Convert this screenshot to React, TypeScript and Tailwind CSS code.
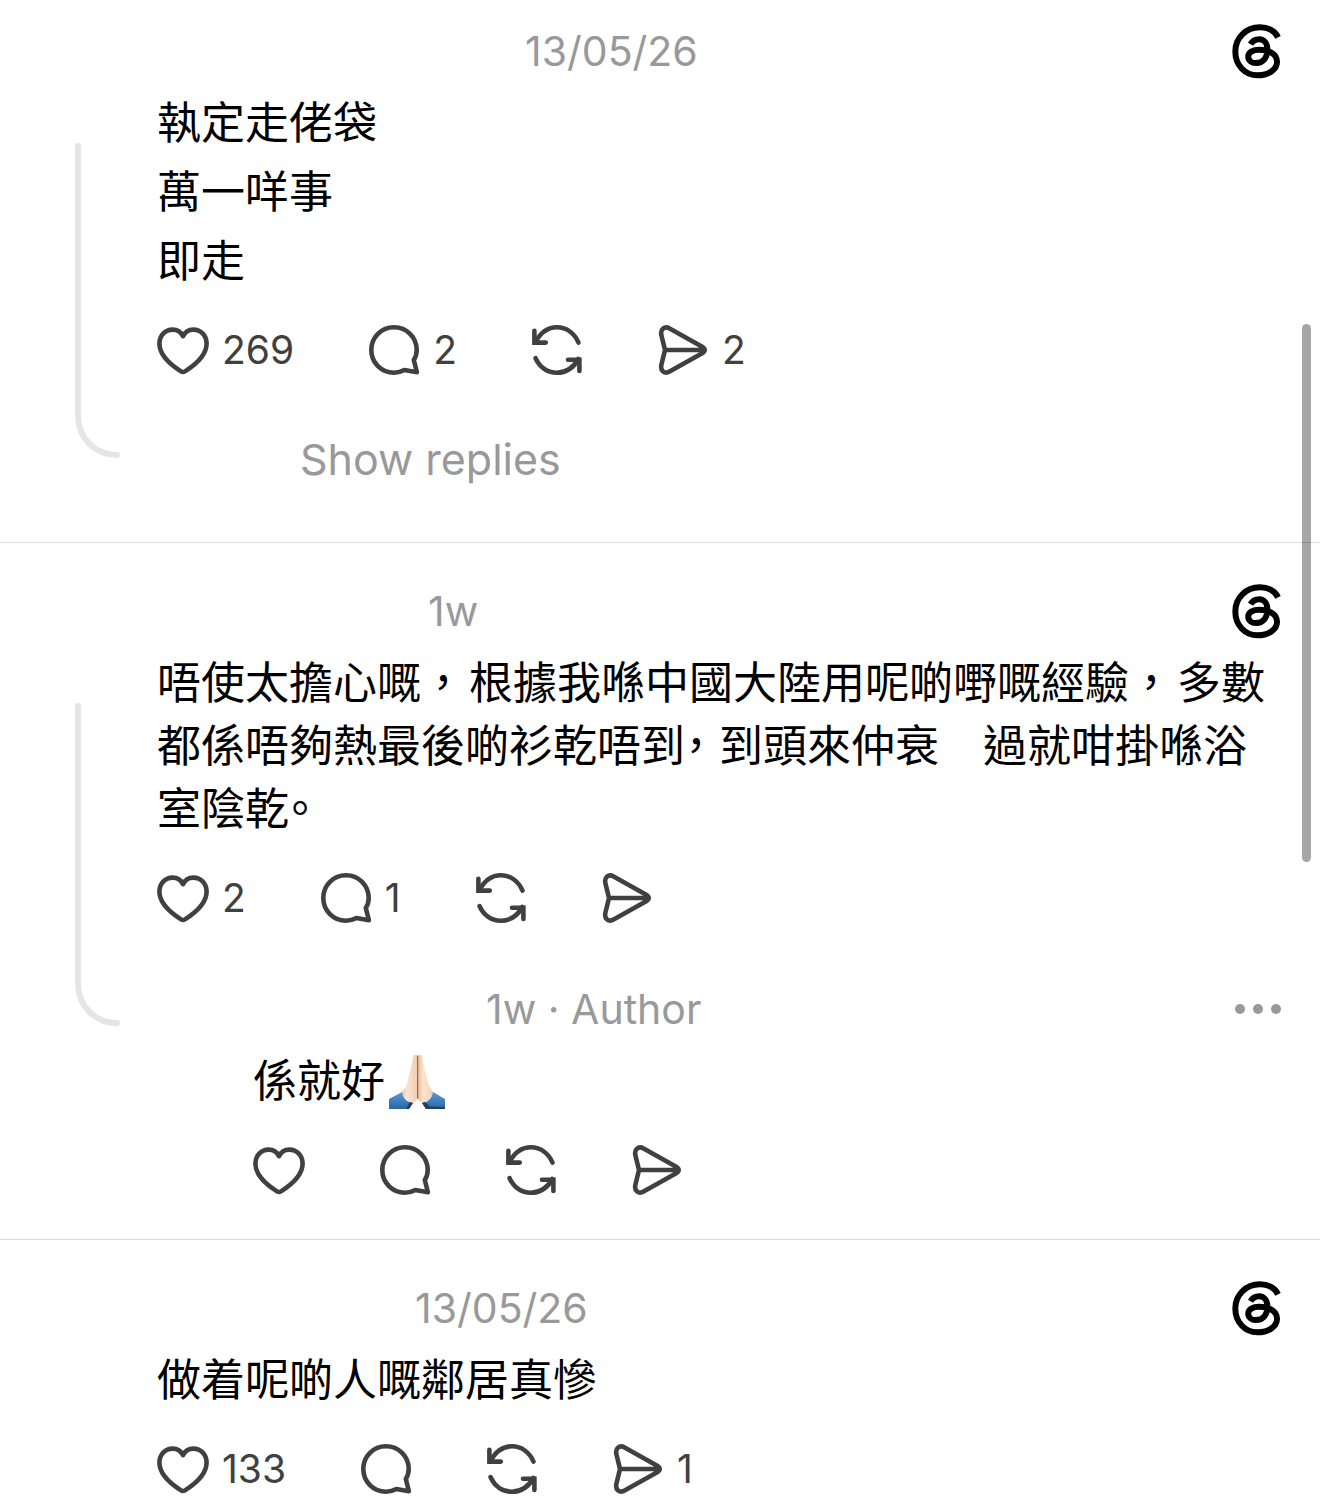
import type { ReactNode } from 'react'
import clsx from 'clsx'

interface Counts {
  likes?: number
  replies?: number
  reposts?: number
  shares?: number
}

function HeartIcon() {
  return (
    <svg viewBox="0 0 52 52" className="size-[52px] shrink-0" fill="none" stroke="currentColor" strokeWidth={4.6} strokeLinejoin="round">
      <path d="M26 12.2C23.8 7.8 20.2 5.6 15.8 5.6C8 5.6 2.4 11.6 2.4 19.6C2.4 30.4 11.6 39.6 24 47.4Q26 48.6 28 47.4C40.4 39.6 49.6 30.4 49.6 19.6C49.6 11.6 44 5.6 36.2 5.6C31.8 5.6 28.2 7.8 26 12.2Z" />
    </svg>
  )
}

function ReplyIcon() {
  return (
    <svg viewBox="0 0 52 52" className="size-[52px] shrink-0" fill="none" stroke="currentColor" strokeWidth={4.6} strokeLinejoin="round">
      <path d="M45.8 36C48 32.6 48.7 29.8 48.7 26C48.7 13.4 38.6 3.3 26 3.3C13.4 3.3 3.3 13.4 3.3 26C3.3 38.6 13.4 48.7 26 48.7C29.8 48.7 33 48 36.4 46.1L48.9 48.2Z" />
    </svg>
  )
}

function RepostIcon() {
  return (
    <svg viewBox="0 0 52 52" className="size-[52px] shrink-0" fill="none" stroke="currentColor" strokeWidth={4.6} strokeLinecap="round" strokeLinejoin="miter">
      <path d="M47.5 18.6C43.6 9.4 35.6 3.3 26 3.3C17 3.3 9.4 8.8 4.4 18.2" />
      <path d="M3.4 6.8V18.6H14.8" />
      <path d="M4.6 34.2C8.6 43 16.4 48.7 26 48.7C35.2 48.7 42.8 43.2 47.4 35" />
      <path d="M37 35.8H48.4V47" />
    </svg>
  )
}

function ShareIcon() {
  return (
    <svg viewBox="0 0 52 52" className="size-[52px] shrink-0" fill="none" stroke="currentColor" strokeWidth={4.6} strokeLinecap="round" strokeLinejoin="round">
      <path d="M8 26L4.4 11.2C3 5.2 7.6 1.6 12.6 4.4L45.2 22.8Q50.2 26 45.2 29.2L12.6 47.6C7.6 50.4 3 46.8 4.4 40.8L8 26H46" />
    </svg>
  )
}

function ThreadsLogo() {
  return (
    <svg viewBox="37 41 148 166" className="h-[55px] w-[49px]" fill="none" stroke="#000" strokeWidth={18} role="img" aria-label="Threads">
      <path d="M176 81C165 60 146 51 121 51C79 51 47 83 47 124C47 165 76 196 114 196C147 196 173 179 173 155C173 133 150 119 119 119C100 119 86 127 86 139C86 151 96 159 109 159C131 159 144 142 144 118C144 99 134 87 119 87C108 87 99 92 93 102" />
    </svg>
  )
}

function FoldedHands() {
  return (
    <svg viewBox="0 0 56 56" className="size-14" role="img" aria-label="Folded hands">
      <defs>
        <linearGradient id="skin" x1="0" x2="1">
          <stop offset="0" stopColor="#e9bd9c" />
          <stop offset="0.35" stopColor="#fde4d0" />
          <stop offset="1" stopColor="#f1cbb0" />
        </linearGradient>
        <linearGradient id="sleeve" x1="0" x2="0" y1="0" y2="1">
          <stop offset="0" stopColor="#5a9ad6" />
          <stop offset="1" stopColor="#2b66a6" />
        </linearGradient>
      </defs>
      <path d="M28.6 1C26 0 24.2 1.2 23.8 4C22.6 14 19 24 17.4 32L12 39L22 51L28.6 45Z" fill="url(#skin)" />
      <path d="M28.6 1C31.2 0 33 1.2 33.4 4C34.6 14 38.2 24 39.8 32L45 39L35 51L28.6 45Z" fill="url(#skin)" />
      <path d="M28.6 2V44.5" stroke="#9c6b4e" strokeWidth={1.2} />
      <path d="M0 45L13 38C14 44 18 48.5 24 49L20 55H0Z" fill="url(#sleeve)" />
      <path d="M56 45L44 38C43 44 39 48.5 33 49L37 55H56Z" fill="url(#sleeve)" />
      <path d="M24 49L20 55H17L20.5 48ZM33 49L37 55H56V53L41 52.5L36 48Z" fill="#263d5c" />
    </svg>
  )
}

function ActionButton({ label, count, children }: { label: string; count?: number; children: ReactNode }) {
  return (
    <button type="button" aria-label={label} className="flex items-center gap-[13px] text-[#404040]">
      {children}
      {count !== undefined && <span className="text-[39px] leading-[52px]">{count}</span>}
    </button>
  )
}

function Actions({ likes, replies, reposts, shares }: Counts) {
  return (
    <div className="mt-[31px] flex gap-[74px]">
      <ActionButton label="Like" count={likes}>
        <HeartIcon />
      </ActionButton>
      <ActionButton label="Reply" count={replies}>
        <ReplyIcon />
      </ActionButton>
      <ActionButton label="Repost" count={reposts}>
        <RepostIcon />
      </ActionButton>
      <ActionButton label="Share" count={shares}>
        <ShareIcon />
      </ActionButton>
    </div>
  )
}

// Line running down from the avatar and bending towards the replies
function Rail({ className }: { className: string }) {
  return (
    <div className={clsx('ml-[75px] mt-[119px] flex flex-1 flex-col', className)}>
      <div className="w-1.5 flex-1 rounded-t-full bg-[#e5e5e5]" />
      <svg viewBox="0 0 45 44" className="h-11 w-[45px]" fill="none" stroke="#e5e5e5" strokeWidth={6} strokeLinecap="round">
        <path d="M3 -3V1C3 24 20 41 42 41" />
      </svg>
    </div>
  )
}

function Header({ indent, children, end }: { indent: string; children: ReactNode; end: ReactNode }) {
  return (
    <header className="flex h-[54px] items-center justify-between pr-[39px]">
      <div className={clsx('text-[41px] leading-[54px] text-[#999999]', indent)}>{children}</div>
      {end}
    </header>
  )
}

function Body({ children }: { children: ReactNode }) {
  return <div className="mt-3.5 flex flex-col gap-1.5 pr-8 text-[44px] leading-[63px] text-black">{children}</div>
}

function Post({ rail, className, children }: { rail?: string; className: string; children: ReactNode }) {
  return (
    <article className={clsx('flex', className)}>
      <div className="flex w-[157px] shrink-0 flex-col">{rail && <Rail className={rail} />}</div>
      <div className="min-w-0 flex-1">{children}</div>
    </article>
  )
}

export default function App() {
  return (
    <main
      lang="zh-Hant"
      className="relative min-h-screen overflow-hidden bg-white font-['Inter','Noto_Sans_CJK_TC',sans-serif]"
    >
      <Post rail="mb-[84px]" className="border-b border-[#dadada] pt-6">
        <Header indent="pl-[368px]" end={<ThreadsLogo />}>
          <time>13/05/26</time>
        </Header>
        <Body>
          <p>執定走佬袋</p>
          <p>萬一咩事</p>
          <p>即走</p>
        </Body>
        <Actions likes={269} replies={2} shares={2} />
        <button type="button" className="mb-14 ml-[143px] mt-14 block text-[43px] leading-[54px] text-[#999999]">
          Show replies
        </button>
      </Post>

      <Post rail="mb-[213px]" className="border-b border-[#dadada] pt-[41px]">
        <Header indent="pl-[271px]" end={<ThreadsLogo />}>
          <time>1w</time>
        </Header>
        <Body>
          <p>
            唔使太擔心嘅<span className="mr-1">，</span>根據我喺中國大陸用呢啲嘢嘅經驗<span className="mr-1">，</span>
            多數都係唔夠熱最後啲衫乾唔到<span className="mr-3 [font-feature-settings:'halt']">，</span>到頭來仲衰
            {'\u3000'}過就咁掛喺浴室陰乾<span className="[font-feature-settings:'halt']">。</span>
          </p>
        </Body>
        <Actions likes={2} replies={1} />
        <section className="mb-[43px] ml-24 mt-[58px]">
          <Header
            indent="pl-[233px]"
            end={
              <button type="button" aria-label="More" className="flex gap-2 text-[#999999]">
                <span className="size-2.5 rounded-full bg-current" />
                <span className="size-2.5 rounded-full bg-current" />
                <span className="size-2.5 rounded-full bg-current" />
              </button>
            }
          >
            <time>1w</time> · Author
          </Header>
          <Body>
            <p className="flex items-center gap-1">
              係就好
              <FoldedHands />
            </p>
          </Body>
          <Actions />
        </section>
      </Post>

      <Post className="pt-[41px]">
        <Header indent="pl-[258px]" end={<ThreadsLogo />}>
          <time>13/05/26</time>
        </Header>
        <Body>
          <p>做着呢啲人嘅鄰居真慘</p>
        </Body>
        <Actions likes={133} shares={1} />
      </Post>

      {/* Scroll indicator */}
      <div className="absolute right-[9px] top-[324px] h-[538px] w-[9px] rounded-full bg-black/35" />
    </main>
  )
}
